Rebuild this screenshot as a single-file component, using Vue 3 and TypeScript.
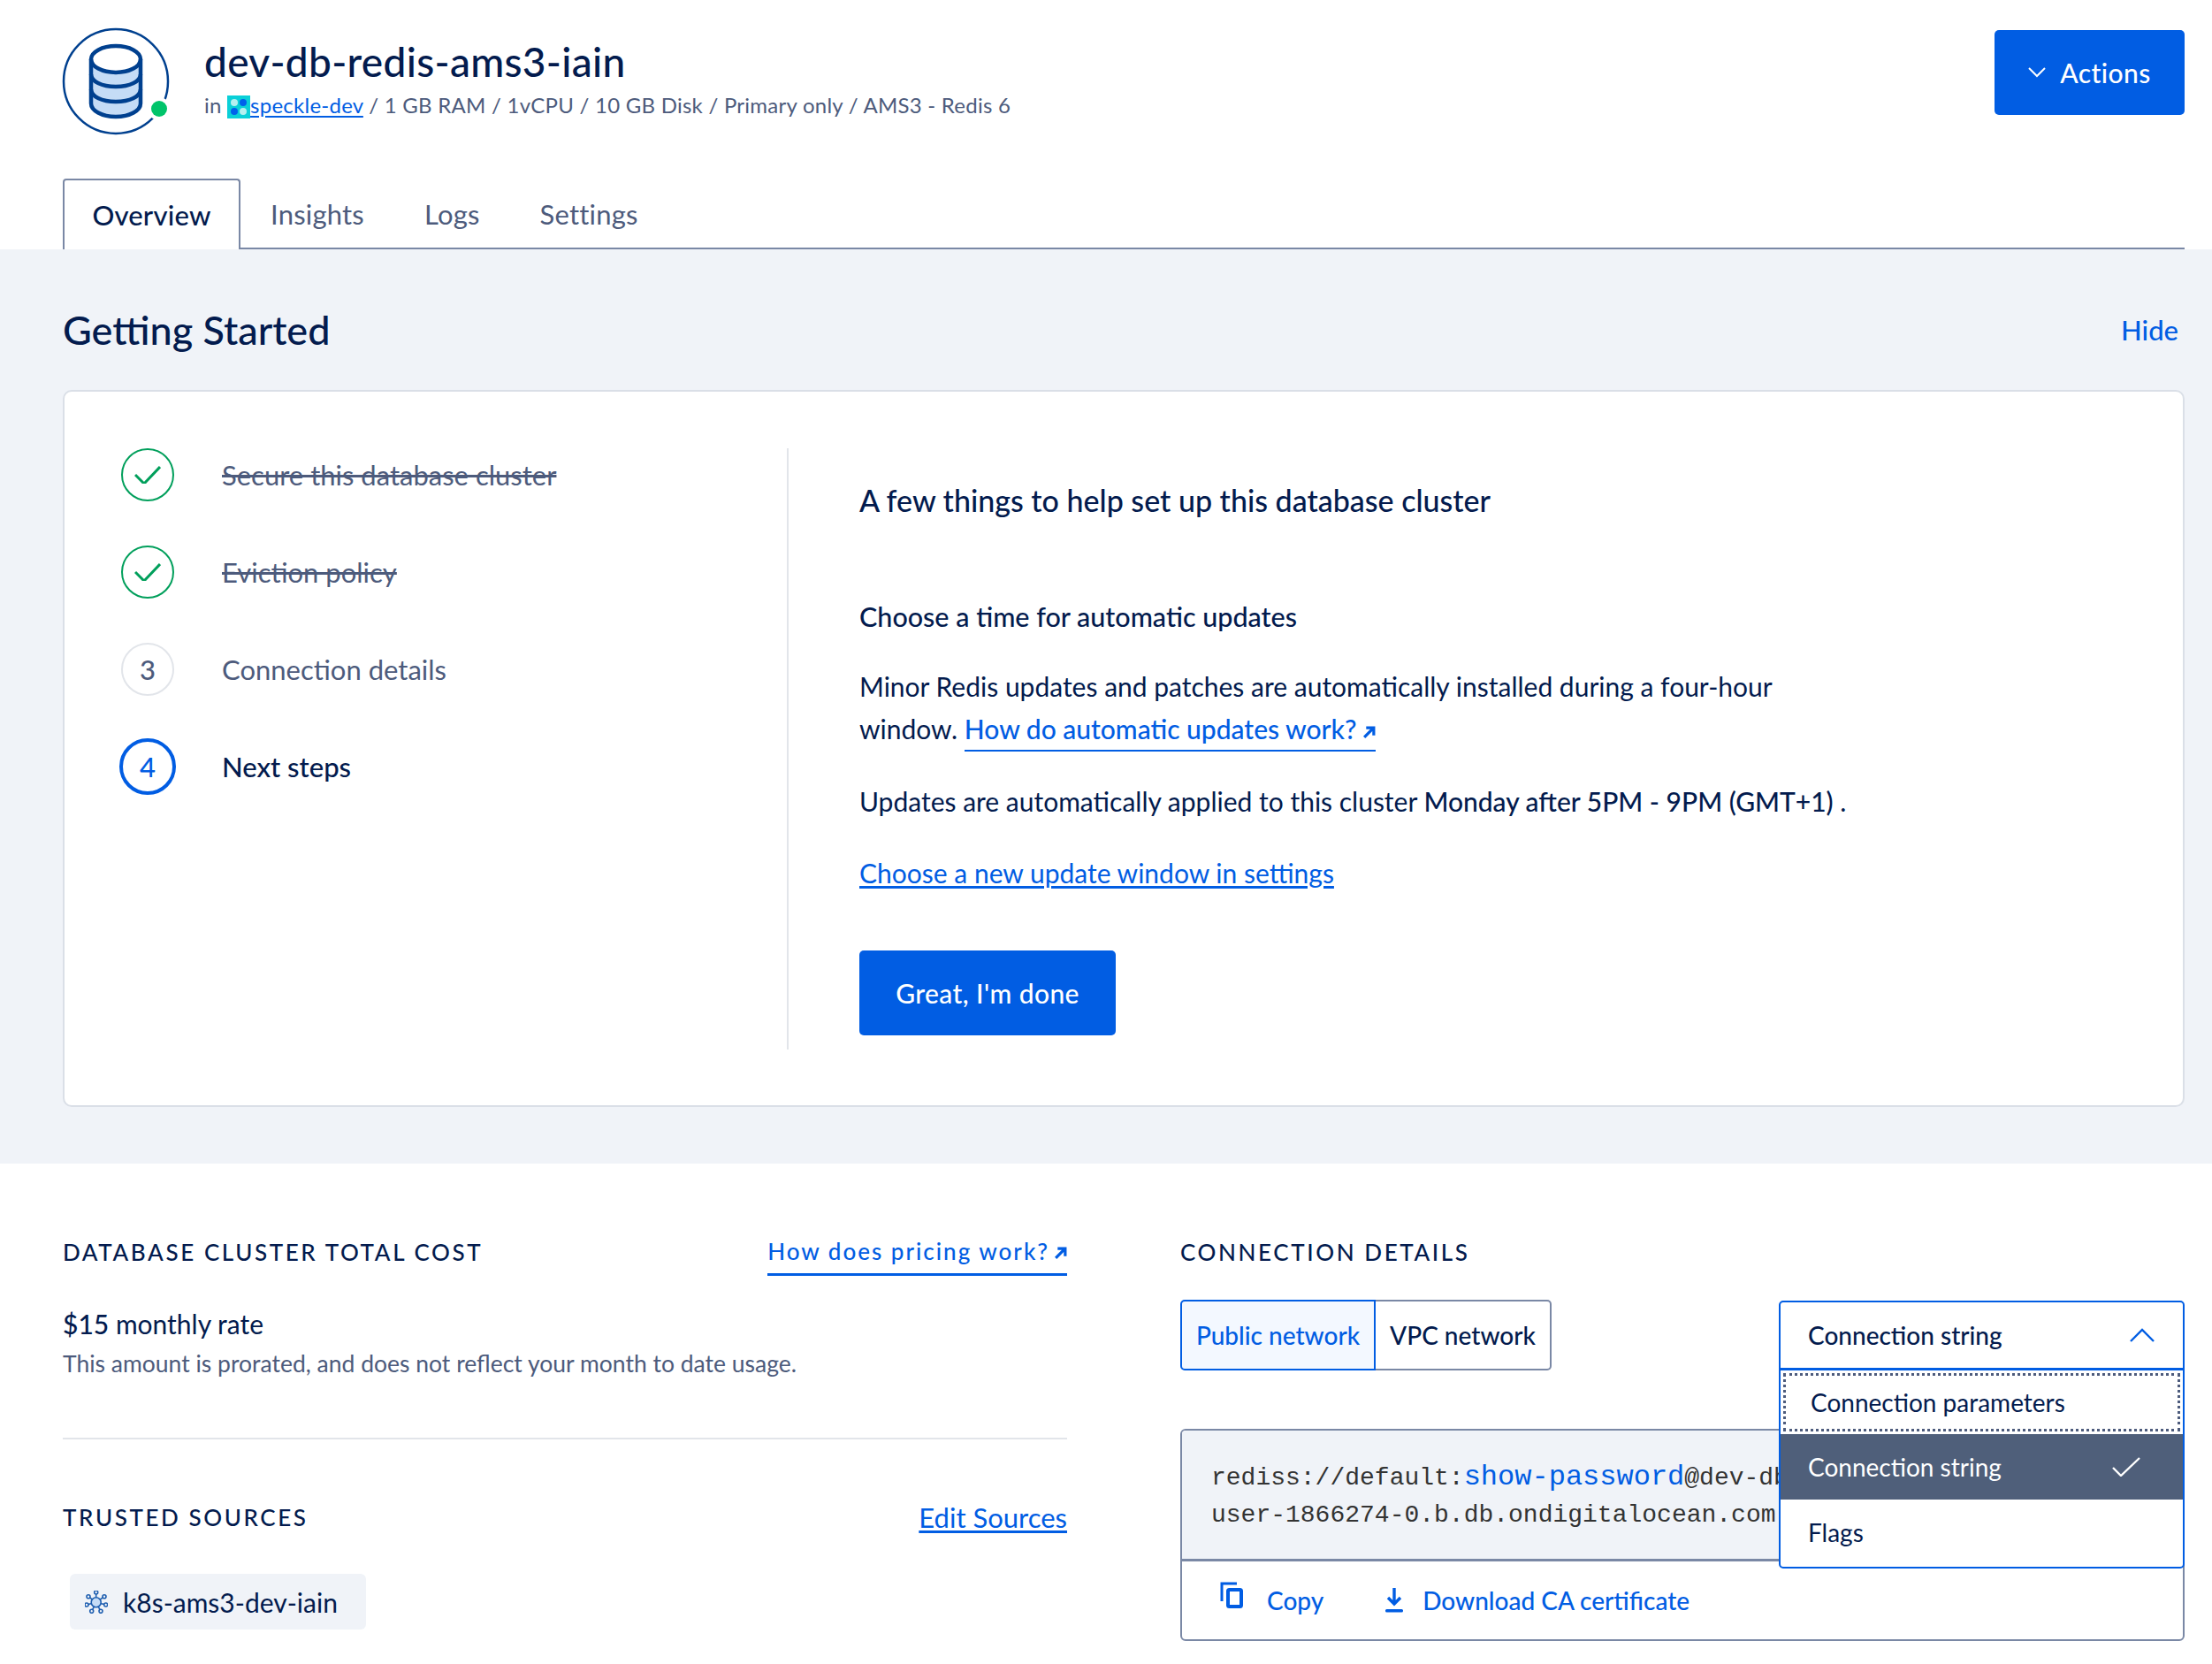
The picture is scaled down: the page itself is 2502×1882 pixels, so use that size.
<script setup lang="ts">
const tabs: string[] = ['Insights', 'Logs', 'Settings']
const hubNodes: [number, number][] = [[110.7, 1801], [120, 1805.7], [121.7, 1815], [116, 1822.3], [105.7, 1822.3], [100, 1815], [102, 1805.7]]
</script>

<template>
  <div class="page">
    <header class="header">
      <svg class="db" viewBox="71 32 122 122" width="122" height="122">
        <circle cx="131" cy="92" r="59" fill="none" stroke="#00408f" stroke-width="2.5" />
        <circle cx="180" cy="123" r="13" fill="#fff" />
        <circle cx="180" cy="123" r="9" fill="#00c46a" />
        <path d="M103 67v50c0 8 12 15 28 15s28-7 28-15V67z" fill="#c5dcf6" />
        <ellipse cx="131" cy="67" rx="28" ry="15" fill="#fff" />
        <g fill="none" stroke="#00408f" stroke-width="4.5">
          <ellipse cx="131" cy="67" rx="28" ry="15" />
          <path d="M103 67v50c0 8 12 15 28 15s28-7 28-15V67" />
          <path d="M103 84c0 8 12 14 28 14s28-6 28-14" />
          <path d="M103 101c0 8 12 14 28 14s28-6 28-14" />
        </g>
      </svg>
      <div class="heading">
        <h1>dev-db-redis-ams3-iain</h1>
        <p class="meta">
          in
          <svg class="org" viewBox="0 0 26 26" width="26" height="26">
            <rect width="26" height="26" fill="#0ad0d8" />
            <circle cx="8" cy="8" r="4" fill="#b5f0f0" />
            <circle cx="18" cy="8" r="4" fill="#0061eb" />
            <circle cx="8" cy="18" r="4" fill="#0061eb" />
            <circle cx="18" cy="18" r="4" fill="#b5f0f0" />
          </svg>
          <a class="ul">speckle-dev</a> / 1 GB RAM / 1vCPU / 10 GB Disk / Primary only / AMS3 - Redis 6
        </p>
      </div>
      <button class="btn actions">
        <svg viewBox="0 0 20 12" width="20" height="12"><path d="M1 1l9 9 9-9" fill="none" stroke="#fff" stroke-width="2" /></svg>
        Actions
      </button>
    </header>

    <nav class="tabs">
      <a class="tab active">Overview</a>
      <a v-for="t in tabs" :key="t" class="tab">{{ t }}</a>
    </nav>

    <section class="started">
      <div class="started-head">
        <h2>Getting Started</h2>
        <a class="hide">Hide</a>
      </div>
      <div class="card">
        <ol class="steps">
          <li class="step">
            <span class="dot done"><svg viewBox="0 0 30 20" width="30" height="20"><path d="M1 10l10 10L29 1" transform="translate(0 0)" fill="none" stroke="#019f5b" stroke-width="3" /></svg></span>
            <s>Secure this database cluster</s>
          </li>
          <li class="step">
            <span class="dot done"><svg viewBox="0 0 30 20" width="30" height="20"><path d="M1 10l10 10L29 1" fill="none" stroke="#019f5b" stroke-width="3" /></svg></span>
            <s>Eviction policy</s>
          </li>
          <li class="step">
            <span class="dot todo">3</span>
            <span>Connection details</span>
          </li>
          <li class="step current">
            <span class="dot now">4</span>
            <span>Next steps</span>
          </li>
        </ol>
        <div class="guide">
          <h3>A few things to help set up this database cluster</h3>
          <h4>Choose a time for automatic updates</h4>
          <p class="p1">
            Minor Redis updates and patches are automatically installed during a four-hour<br />
            window. <a class="ext">How do automatic updates work?<svg viewBox="0 0 14 14" width="15" height="15"><path d="M2 12L11 3M4 2h8v8" fill="none" stroke="#015de3" stroke-width="3" /></svg></a>
          </p>
          <p class="p2">Updates are automatically applied to this cluster <b>Monday after 5PM - 9PM (GMT+1)</b> .</p>
          <p class="p3"><a class="ul">Choose a new update window in settings</a></p>
          <button class="btn done-btn">Great, I'm done</button>
        </div>
      </div>
    </section>

    <section class="lower">
      <div class="col">
        <div class="col-head">
          <h5>DATABASE CLUSTER TOTAL COST</h5>
          <a class="pricing">How does pricing work?<svg viewBox="0 0 14 14" width="15" height="15"><path d="M2 12L11 3M4 2h8v8" fill="none" stroke="#015de3" stroke-width="3" /></svg></a>
        </div>
        <p class="rate"><b>$15</b> monthly rate</p>
        <p class="note">This amount is prorated, and does not reflect your month to date usage.</p>
        <hr />
        <div class="col-head trusted">
          <h5>TRUSTED SOURCES</h5>
          <a class="ul edit">Edit Sources</a>
        </div>
        <div class="chip">
          <svg viewBox="98 1799 26 26" width="26" height="26">
            <g fill="none" stroke="#1f5fb0" stroke-width="1.6">
              <path v-for="(n, i) in hubNodes" :key="'l' + i" :d="`M110.7 1812.3L${n[0]} ${n[1]}`" />
              <circle cx="110.7" cy="1812.3" r="5.5" fill="#c5dcf6" />
              <circle v-for="(n, i) in hubNodes" :key="'c' + i" :cx="n[0]" :cy="n[1]" r="2" fill="#f0f3f8" />
            </g>
          </svg>
          <span>k8s-ams3-dev-iain</span>
        </div>
      </div>

      <div class="col conn">
        <div class="col-head"><h5>CONNECTION DETAILS</h5></div>
        <div class="seg">
          <a class="seg-item on">Public network</a>
          <a class="seg-item">VPC network</a>
        </div>
        <div class="box">
          <div class="code">
            <div class="line">rediss://default:<a class="pw">show-password</a>@dev-db-redis-ams3-iain-do-</div>
            <div class="line">user-1866274-0.b.db.ondigitalocean.com:25061</div>
          </div>
          <div class="foot">
            <a class="fa">
              <svg class="i-copy" viewBox="0 0 26 30" width="26" height="30">
                <path d="M2 22V2h17" fill="none" stroke="#015de3" stroke-width="3" />
                <rect x="9" y="9" width="15" height="19" rx="1.5" fill="none" stroke="#015de3" stroke-width="4" />
              </svg>
              <span>Copy</span>
            </a>
            <a class="fa dl">
              <svg viewBox="0 0 20 28" width="20" height="28">
                <path d="M10 0v17M3 11l7 7 7-7" fill="none" stroke="#015de3" stroke-width="3.4" />
                <rect y="24" width="20" height="3.4" rx="1.5" fill="#015de3" />
              </svg>
              <span>Download CA certificate</span>
            </a>
          </div>
        </div>
        <div class="menu">
          <div class="menu-head">
            <span>Connection string</span>
            <svg viewBox="0 0 28 16" width="28" height="16"><path d="M1 15L14 2l13 13" fill="none" stroke="#015de3" stroke-width="2.4" /></svg>
          </div>
          <div class="opt focus">Connection parameters</div>
          <div class="opt sel">
            <span>Connection string</span>
            <svg viewBox="0 0 32 22" width="32" height="22"><path d="M1 12l9 9L31 1" fill="none" stroke="#fff" stroke-width="2.4" /></svg>
          </div>
          <div class="opt flags">Flags</div>
        </div>
      </div>
    </section>
  </div>
</template>

<style>
html, body { margin: 0; background: #fff; }
</style>

<style scoped>
* { box-sizing: border-box; }
.page {
  width: 2502px;
  min-height: 1882px;
  font-family: Lato, "Open Sans", sans-serif;
  color: #031b4e;
  font-size: 28.8px;
  background: #fff;
}
h1, h2, h3, h4, h5, p, ol { margin: 0; padding: 0; }
a { color: #015de3; }
.ul { text-decoration: underline; text-underline-offset: 3px; }

.header { display: flex; align-items: flex-start; padding: 32px 31px 0 71px; height: 170px; }
.db { overflow: visible; flex: none; }
.heading { margin-left: 38px; margin-top: 9px; flex: 1; }
h1 { font-size: 46px; line-height: 58px; font-weight: 500; letter-spacing: 0.3px; }
.meta { font-size: 24px; line-height: 36px; color: #4d5b7c; margin-top: 2px; letter-spacing: 0.25px; }
.org { vertical-align: -6px; }
.btn {
  border: 0; border-radius: 5px; background: #015de3; color: #fff;
  font-family: inherit; font-size: 30px; font-weight: 500; letter-spacing: 0.4px;
}
.actions {
  width: 215px; height: 96px; margin-top: 2px;
  display: flex; align-items: center; justify-content: center; gap: 16px;
}

.tabs { display: flex; height: 80px; margin: 32px 31px 0 71px; border-bottom: 2px solid #7a88a5; }
.tab {
  height: 80px; padding: 0 34px; display: flex; align-items: center;
  font-size: 31px; color: #4d5b7c; letter-spacing: 0.2px;
}
.tab.active {
  width: 201px; justify-content: center; padding: 0;
  color: #031b4e; font-weight: 500; background: #fff;
  border: 2px solid #7a88a5; border-bottom: 0; border-radius: 4px 4px 0 0;
  margin-right: 0;
}

.started { background: #f0f3f8; padding: 66px 31px 64px 71px; }
.started-head { display: flex; justify-content: space-between; align-items: center; height: 50px; padding-right: 7px; }
h2 { font-size: 45px; line-height: 50px; font-weight: 500; }
.hide { font-size: 31px; font-weight: 500; }
.card {
  display: flex; margin-top: 43px; background: #fff;
  border: 2px solid #dadfe7; border-radius: 10px; padding: 64px 0 63px;
}
.steps { width: 819px; height: 680px; flex: none; border-right: 2px solid #e2e5ea; list-style: none; padding-left: 64px; }
.step { display: flex; align-items: center; height: 60px; margin-bottom: 50px; gap: 54px; font-size: 31px; color: #4d5b7c; }
.step.current { color: #031b4e; font-weight: 500; }
.dot {
  width: 60px; height: 60px; flex: none; border-radius: 50%; display: flex; align-items: center; justify-content: center;
  font-size: 31px; font-weight: 500;
}
.dot.done { border: 2.5px solid #019f5b; }
.dot.todo { border: 2.5px solid #e2e5ea; }
.dot.now { border: 4px solid #015de3; color: #015de3; width: 64px; height: 64px; margin: 0 -2px; }
s { text-decoration-thickness: 3px; }

.guide { padding-left: 80px; font-size: 30px; }
h3 { font-size: 34px; line-height: 48px; font-weight: 500; margin-top: 35px; }
h4 { font-size: 30.5px; line-height: 40px; font-weight: 500; margin-top: 87px; }
.guide p { line-height: 48px; }
.p1 { margin-top: 35px; }
.p2 { margin-top: 34px; }
.p3 { margin-top: 33px; }
b { font-weight: 500; }
.ext { font-weight: 500; border-bottom: 2.5px solid #015de3; padding-bottom: 6px; }
.ext svg { margin-left: 6px; }
.done-btn { display: block; width: 290px; height: 96px; margin-top: 64px; }

.lower { display: grid; grid-template-columns: 1136px 1136px; column-gap: 128px; padding: 80px 31px 0 71px; }
.col { position: relative; }
.col-head { display: flex; justify-content: space-between; align-items: center; height: 40px; }
h5 { font-size: 26px; font-weight: 500; letter-spacing: 2.6px; line-height: 40px; }
.pricing { font-size: 26px; font-weight: 500; letter-spacing: 2px; border-bottom: 3px solid #015de3; padding-bottom: 9px; margin-top: 10px; }
.pricing svg { margin-left: 5px; }
.rate { margin-top: 41px; font-size: 30px; line-height: 40px; }
.note { margin-top: 7px; font-size: 26.5px; line-height: 36px; color: #4d5b7c; }
hr { margin: 66px 0 0; height: 2px; border: 0; background: #e2e5ea; }
.trusted { margin-top: 68px; }
.edit { font-size: 31px; }
.chip {
  display: flex; align-items: center; gap: 17px; width: 335px; height: 63px; margin: 44px 0 0 8px;
  padding-left: 17px; background: #f0f3f8; border-radius: 6px; font-size: 30px;
}

.seg { display: flex; width: 420px; height: 80px; margin-top: 34px; }
.seg-item {
  flex: none; width: 199px; display: flex; align-items: center; justify-content: center;
  border: 2px solid #7a88a5; border-left: 0; border-radius: 0 5px 5px 0; color: #031b4e; font-size: 28px; font-weight: 500;
}
.seg-item.on {
  width: 221px; background: #f3f8ff; color: #015de3; border: 2px solid #015de3; border-radius: 5px 0 0 5px;
}

.box { margin-top: 66px; height: 240px; border: 2px solid #7a88a5; border-radius: 6px; overflow: hidden; }
.code { height: 148px; background: #f0f3f8; border-bottom: 3px solid #7a88a5; padding: 32px 0 0 33px; font-family: "Liberation Mono", monospace; font-size: 28px; line-height: 42px; color: #333; }
.line { white-space: nowrap; }
.pw { font-size: 32px; }
.foot { height: 88px; display: flex; align-items: center; padding-left: 43px; font-size: 28px; font-weight: 500; }
.fa { display: flex; align-items: center; }
.i-copy { margin-right: 27px; margin-top: -12px; }
.dl { margin-left: 70px; }
.dl svg { margin-right: 22px; }

.menu {
  position: absolute; top: 75px; right: 0; width: 459px; height: 303px; background: #fff;
  border: 2.5px solid #015de3; border-radius: 5px; z-index: 2; font-size: 28px;
}
.menu-head {
  height: 77px; display: flex; align-items: center; justify-content: space-between;
  padding: 0 32px 0 31px; border-bottom: 3px solid #015de3; font-weight: 500;
}
.opt { display: flex; align-items: center; justify-content: space-between; padding-left: 31px; }
.focus { height: 66px; margin: 3px 3px 3px 3px; padding-left: 28px; border: 3px dotted #4d5b7c; }
.sel { height: 74px; background: #4f5f7a; color: #fff; padding-right: 48px; }
.flags { height: 74px; }
</style>
